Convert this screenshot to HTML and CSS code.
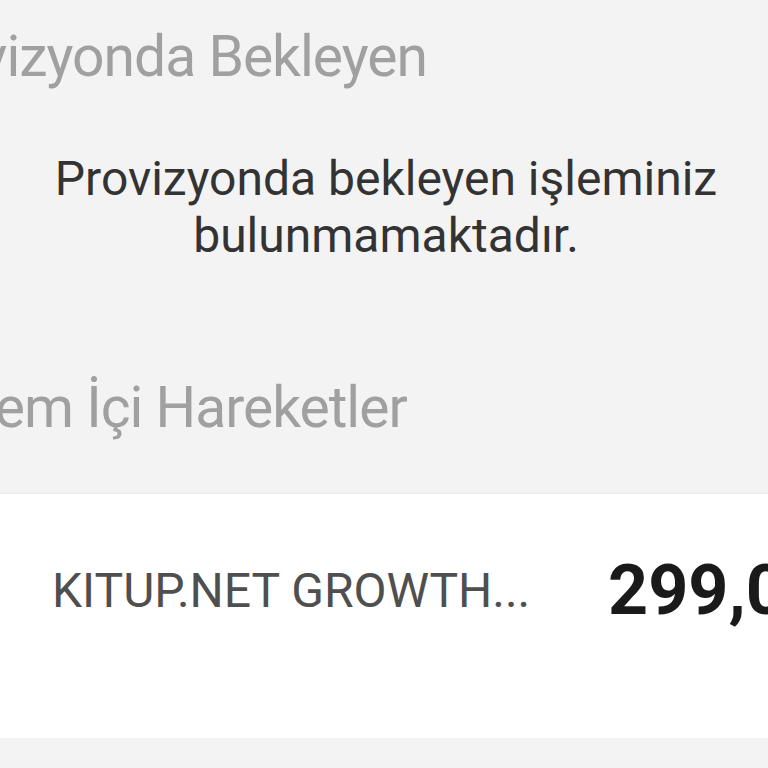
FILE: index.html
```html
<!DOCTYPE html>
<html lang="tr">
<head>
    <meta charset="UTF-8">
    <meta name="viewport" content="width=device-width, initial-scale=1.0">
    <title>Hesap Hareketleri</title>
    <link rel="stylesheet" href="styles.css">
</head>
<body>
    <div class="page">
        <h2 class="section-title pending">Provizyonda Bekleyen</h2>
        <p class="empty-message">Provizyonda bekleyen işleminiz<br>bulunmamaktadır.</p>

        <h2 class="section-title movements">İşlem İçi Hareketler</h2>

        <div class="movement-list">
            <div class="movement-row">
                <span class="movement-name">KITUP.NET GROWTH...</span>
                <span class="movement-amount">299,00 TL</span>
            </div>
        </div>
    </div>
</body>
</html>
```

FILE: styles.css
```css
html, body {
    margin: 0;
    padding: 0;
    overflow: hidden;
}

body {
    font-family: Roboto, "Noto Sans", sans-serif;
    background-color: #f3f3f3;
    width: 768px;
    height: 768px;
}

.page {
    width: 768px;
}

.section-title {
    margin: 0;
    font-size: 57px;
    line-height: 70px;
    font-weight: 400;
    letter-spacing: -1px;
    color: #a0a0a0;
    white-space: nowrap;
}

.section-title.pending {
    padding-top: 22px;
    margin-left: -104px;
}

.section-title.movements {
    padding-top: 109px;
    margin-left: -61px;
}

.empty-message {
    margin: 58px 0 0 0;
    padding-left: 4px;
    text-align: center;
    font-size: 48px;
    line-height: 57px;
    color: #333;
    white-space: nowrap;
}

.movement-list {
    margin-top: 50px;
    width: 1000px;
    background-color: #fff;
    border-top: 1px solid #ebebeb;
}

.movement-row {
    display: flex;
    align-items: center;
    height: 192px;
    padding: 0 0 52px 52px;
}

.movement-name {
    width: 556px;
    flex-shrink: 0;
    font-size: 48px;
    color: #4f4f4f;
    white-space: nowrap;
}

.movement-amount {
    font-size: 70px;
    font-weight: 700;
    color: #1a1a1a;
    white-space: nowrap;
}
```
